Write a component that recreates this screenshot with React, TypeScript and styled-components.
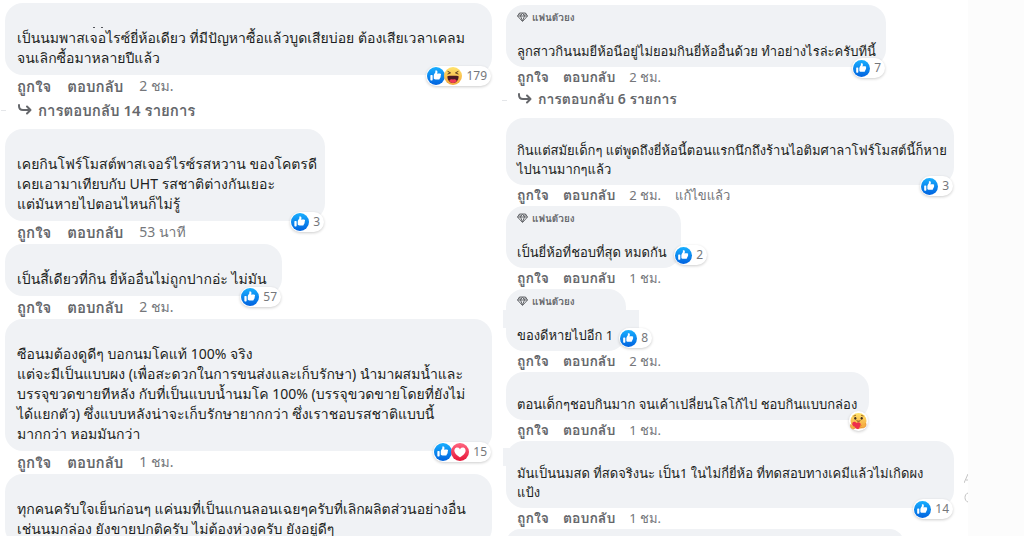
import React from "react";
import styled, { createGlobalStyle, css } from "styled-components";

const GlobalStyle = createGlobalStyle`
  * { box-sizing: border-box; }
  body {
    margin: 0;
    background: #fff;
    overflow: hidden;
    font-family: "Noto Sans", "Loma", "Noto Sans Thai", "Open Sans", sans-serif;
    color: #1c1e21;
  }
`;

type Density = "regular" | "compact";

const Page = styled.main`
  display: grid;
  grid-template-columns: 501fr 467fr 56fr;
  height: 100vh;
  overflow: hidden;
`;

const Thread = styled.section<{ $density: Density }>`
  min-width: 0;
  ${({ $density }) =>
    $density === "regular"
      ? css`
          --text: 14px;
          --line: 20px;
          --top: 25px;
          --bottom: 7px;
          --row: 23px;
          --replies: 31px;
          --gap: 16px;
          --action: 15px;
          --meta: 14px;
          --inset: 12px;
          --icon: 18px;
          padding: 3px 9px 0 5px;
        `
      : css`
          --text: 13px;
          --line: 19px;
          --top: 23px;
          --bottom: 6px;
          --row: 21px;
          --replies: 30px;
          --gap: 14px;
          --action: 14px;
          --meta: 13px;
          --inset: 11px;
          --icon: 17px;
          padding: 5px 14px 0 5px;
        `}
`;

const Comment = styled.article`
  display: flex;
  flex-direction: column;
  align-items: flex-start;
`;

const Bubble = styled.div<{ $width: string }>`
  position: relative;
  width: ${({ $width }) => $width};
  max-width: 100%;
  padding: 0 var(--inset) var(--bottom);
  border-radius: 18px;
  background: #f0f2f5;
`;

const Smudge = styled.span<{ $width: string; $top: string }>`
  position: absolute;
  left: -3px;
  top: ${({ $top }) => $top};
  width: ${({ $width }) => $width};
  height: 18px;
  background: #f0f2f5;
`;

const Specks = styled.span`
  position: absolute;
  left: 88px;
  top: 24px;
  width: 10px;
  height: 1px;
  border: solid #55585c;
  border-width: 0 2px;
`;

const Spacer = styled.div`
  height: var(--top);
`;

const FanBadge = styled.div`
  display: flex;
  align-items: center;
  gap: 4px;
  height: 37px;
  padding-bottom: 13px;
  font-size: 10px;
  font-weight: 600;
  color: #65676b;
`;

const Message = styled.p`
  position: relative;
  margin: 0;
  font-size: var(--text);
  line-height: var(--line);
  white-space: nowrap;
`;

const Line = styled.span`
  display: block;
`;

const Actions = styled.div`
  display: flex;
  align-items: center;
  gap: var(--gap);
  height: var(--row);
  padding: 0 var(--inset) 2px;
  font-size: var(--meta);
  line-height: 18px;
  color: #75777b;
  white-space: nowrap;
`;

const TextButton = styled.button`
  padding: 0;
  border: 0;
  background: none;
  font: inherit;
  font-size: var(--action);
  font-weight: 600;
  color: #65676b;
  cursor: pointer;
`;

const Replies = styled.div`
  position: relative;
  display: flex;
  align-items: center;
  height: var(--replies);
  padding: 0 var(--inset) 8px;
  line-height: 18px;
  white-space: nowrap;

  &::before {
    content: "";
    position: absolute;
    left: -4px;
    top: 12px;
    width: 5px;
    height: 1px;
    background: #e4e6e9;
  }

  ${TextButton} {
    display: flex;
    align-items: center;
    gap: 6px;
  }
`;

const Pill = styled.div<{ $outside?: boolean; $bare?: boolean }>`
  position: absolute;
  right: ${({ $outside }) => ($outside ? "-26px" : "1px")};
  bottom: ${({ $outside }) => ($outside ? "3px" : "-11px")};
  display: flex;
  align-items: center;
  height: 20px;
  padding: 1px ${({ $bare }) => ($bare ? "1px" : "4px")} 1px 1px;
  border-radius: 10px;
  background: #fff;
  box-shadow: 0 1px 3px rgba(0, 0, 0, 0.2);
  font-size: 12px;
  line-height: 18px;
  color: #75777b;

  svg {
    width: var(--icon);
    height: var(--icon);
  }

  svg + svg { margin-left: -1px; }
`;

const Count = styled.span`
  margin-left: 4px;
`;

const Gutter = styled.aside`
  position: relative;
  background: #fcfcfc;

  svg {
    position: absolute;
    left: -4px;
    top: 472px;
  }
`;

const LikeIcon = () => (
  <svg viewBox="0 0 16 16" aria-label="ถูกใจ">
    <defs>
      <linearGradient id="like" x1="0" y1="0" x2="0" y2="1">
        <stop offset="0" stopColor="#18AFFF" />
        <stop offset="1" stopColor="#0062DF" />
      </linearGradient>
    </defs>
    <circle cx="8" cy="8" r="8" fill="url(#like)" />
    <path
      fill="#fff"
      d="M12.016 7.338c.176.123.338.245.338.674 0 .43-.229.604-.474.725.1.163.132.36.089.546-.077.344-.392.611-.672.69.121.194.159.385.015.62-.185.295-.346.407-1.058.407H7.5c-.988 0-1.5-.546-1.5-1V7.665c0-1.23 1.467-2.275 1.467-3.13L7.361 3.47c-.005-.065.008-.224.058-.27.08-.079.301-.2.635-.2.218 0 .363.041.534.123.581.277.732.978.732 1.542 0 .271-.414 1.083-.47 1.364 0 0 .867-.192 1.879-.199 1.061-.006 1.749.19 1.749.842 0 .261-.219.523-.316.666zM3.6 7h.8a.6.6 0 0 1 .6.6v3.8a.6.6 0 0 1-.6.6h-.8a.6.6 0 0 1-.6-.6V7.6a.6.6 0 0 1 .6-.6z"
    />
  </svg>
);

const HeartIcon = () => (
  <svg viewBox="0 0 16 16" aria-label="รักเลย">
    <defs>
      <linearGradient id="heart" x1="0" y1="0" x2="0" y2="1">
        <stop offset="0" stopColor="#FF6680" />
        <stop offset="1" stopColor="#E61739" />
      </linearGradient>
    </defs>
    <circle cx="8" cy="8" r="8" fill="url(#heart)" />
    <path
      fill="#fff"
      d="M10.473 4C8.275 4 8 5.824 8 5.824S7.726 4 5.528 4c-2.114 0-2.73 2.222-2.472 3.41C3.736 10.55 8 12.75 8 12.75s4.265-2.2 4.945-5.34c.257-1.188-.36-3.41-2.472-3.41"
    />
  </svg>
);

const HahaIcon = () => (
  <svg viewBox="0 0 16 16" aria-label="ฮ่าๆ">
    <defs>
      <linearGradient id="haha" x1="0" y1="0" x2="0" y2="1">
        <stop offset="0" stopColor="#FFE36B" />
        <stop offset="1" stopColor="#F5A73C" />
      </linearGradient>
    </defs>
    <circle cx="8" cy="8" r="8" fill="url(#haha)" />
    <path d="M3 8.2c0 3.4 2 6 5 6s5-2.600 5-6c-1.500-.5-8.500-.5-10 0z" fill="#4b1a24" />
    <path d="M4.600 12.300C5.500 10.700 6.700 10.500 8 11.200c1.300-.7 2.500-.5 3.400 1.100-.8 1.200-2 1.900-3.400 1.900s-2.600-.7-3.400-1.900z" fill="#f23c57" />
    <path d="M3.500 4l2.300 1.200-2.300 1M12.500 4l-2.300 1.200 2.300 1" fill="none" stroke="#4b2c1c" strokeWidth=".8" strokeLinecap="round" strokeLinejoin="round" />
  </svg>
);

const CareIcon = () => (
  <svg viewBox="0 0 16 16" aria-label="ห่วงใย">
    <defs>
      <linearGradient id="care" x1="0" y1="0" x2="0" y2="1">
        <stop offset="0" stopColor="#FFE36B" />
        <stop offset="1" stopColor="#F3A03A" />
      </linearGradient>
    </defs>
    <circle cx="8" cy="7.500" r="7.500" fill="url(#care)" />
    <path d="M3.600 2.800l1.700-.6M10.700 2.200l1.700.6" stroke="#8a4b18" strokeWidth=".7" strokeLinecap="round" />
    <ellipse cx="5" cy="5" rx="1" ry="1.300" fill="#3b2a22" />
    <ellipse cx="11" cy="5" rx="1" ry="1.300" fill="#3b2a22" />
    <path d="M6.500 7.300c.8.7 2.200.7 3 0" fill="none" stroke="#5b2a12" strokeWidth=".8" strokeLinecap="round" />
    <path d="M7.600 15.300C4.500 14.400 2 12.500 2.100 10.200c.1-2 2.700-2.600 3.900-.7 1.600-1.700 4.300-.7 4.100 1.400-.1 1.800-1.300 3.300-2.500 4.400z" fill="#ee2f4c" />
    <path d="M.8 10.500c-1 1.200-.6 3.300 1 4.200 1.200.6 2.600.3 3-.5.300-.8-.4-1.300-1.400-1.400M14.800 9.500c.9 1.600.1 3.800-1.800 4.400-1.500.5-3.100-.1-3.400-1-.2-.9.600-1.400 1.700-1.200" fill="#f6b045" stroke="#df7f24" strokeWidth=".5" />
  </svg>
);

const GemIcon = () => (
  <svg width="11" height="10" viewBox="0 0 22 20" fill="none" stroke="#65676b" strokeWidth="2" strokeLinejoin="round" aria-hidden="true">
    <path d="M5 2h12l4 6-10 11L1 8z" />
    <path d="M1 8h20M7 8l4 10 4-10M5 2l2 6 4-6 4 6 2-6" />
  </svg>
);

const ReplyArrow = () => (
  <svg width="15" height="14" viewBox="0 0 15 14" fill="none" stroke="#65676b" strokeWidth="2" strokeLinecap="round" strokeLinejoin="round" aria-hidden="true">
    <path d="M2 2v1c0 2.500 1 4 4 4h7M10 3.500L13.500 7 10 10.500" />
  </svg>
);

type Reaction = "like" | "heart" | "haha" | "care";
const icons: Record<Reaction, React.FC> = { like: LikeIcon, heart: HeartIcon, haha: HahaIcon, care: CareIcon };

interface CommentData {
  lines: string[];
  width?: string;
  fan?: boolean;
  time?: string;
  edited?: boolean;
  replies?: number;
  reactions?: Reaction[];
  count?: number;
  outside?: boolean;
  specks?: boolean;
  smudge?: { width: string; top: string };
}

const left: CommentData[] = [
  {
    lines: ["เป็นนมพาสเจอไรซ์ยี่ห้อเดียว ที่มีปัญหาซื้อแล้วบูดเสียบ่อย ต้องเสียเวลาเคลม", "จนเลิกซื้อมาหลายปีแล้ว"],
    time: "2 ชม.", replies: 14, reactions: ["like", "haha"], count: 179, specks: true,
  },
  {
    lines: ["เคยกินโฟร์โมสต์พาสเจอร์ไรซ์รสหวาน ของโคตรดี", "เคยเอามาเทียบกับ UHT รสชาติต่างกันเยอะ", "แต่มันหายไปตอนไหนก็ไม่รู้"],
    width: "320px", time: "53 นาที", reactions: ["like"], count: 3,
  },
  {
    lines: ["เป็นสี้เดียวที่กิน ยี่ห้ออื่นไม่ถูกปากอ่ะ ไม่มัน"],
    width: "277px", time: "2 ชม.", reactions: ["like"], count: 57,
  },
  {
    lines: [
      "ซือนมต้องดูดีๆ บอกนมโคแท้ 100% จริง",
      "แต่จะมีเป็นแบบผง (เพื่อสะดวกในการขนส่งและเก็บรักษา) นำมาผสมน้ำและ",
      "บรรจุขวดขายทีหลัง กับที่เป็นแบบน้ำนมโค 100% (บรรจุขวดขายโดยที่ยังไม่",
      "ได้แยกตัว) ซึ่งแบบหลังน่าจะเก็บรักษายากกว่า ซึ่งเราชอบรสชาติแบบนี้",
      "มากกว่า หอมมันกว่า",
    ],
    time: "1 ชม.", reactions: ["like", "heart"], count: 15,
  },
  {
    lines: ["ทุกคนครับใจเย็นก่อนๆ แค่นมที่เป็นแกนลอนเฉยๆครับที่เลิกผลิตส่วนอย่างอื่น", "เช่นนมกล่อง ยังขายปกติครับ ไม่ต้องห่วงครับ ยังอยู่ดีๆ"],
  },
];

const right: CommentData[] = [
  {
    lines: ["ลูกสาวกินนมยีห้อนีอยู่ไม่ยอมกินยี่ห้ออื่นด้วย ทำอย่างไรล่ะครับทีนี้"],
    width: "380px", fan: true, time: "2 ชม.", replies: 6, reactions: ["like"], count: 7,
  },
  {
    lines: ["กินแต่สมัยเด็กๆ แต่พูดถึงยี่ห้อนี้ตอนแรกนึกถึงร้านไอติมศาลาโฟร์โมสต์นี้ก็หาย", "ไปนานมากๆแล้ว"],
    time: "2 ชม.", edited: true, reactions: ["like"], count: 3,
  },
  {
    lines: ["เป็นยี่ห้อที่ชอบที่สุด หมดกัน"],
    width: "175px", fan: true, time: "1 ชม.", reactions: ["like"], count: 2, outside: true,
  },
  {
    lines: ["ของดีหายไปอีก 1"],
    width: "120px", fan: true, time: "2 ชม.", reactions: ["like"], count: 8, outside: true,
    smudge: { width: "136px", top: "21px" },
  },
  {
    lines: ["ตอนเด็กๆชอบกินมาก จนเค้าเปลี่ยนโลโก้ไป ชอบกินแบบกล่อง"],
    width: "363px", time: "1 ชม.", reactions: ["care"],
  },
  {
    lines: ["มันเป็นนมสด ที่สดจริงนะ เป็น1 ในไม่กี่ยี่ห้อ ที่ทดสอบทางเคมีแล้วไม่เกิดผง", "แป้ง"],
    time: "1 ชม.", reactions: ["like"], count: 14, smudge: { width: "20px", top: "7px" },
  },
  { lines: [""], width: "398px" },
];

const CommentItem = ({ data }: { data: CommentData }) => (
  <Comment>
    <Bubble $width={data.width ?? "100%"}>
      {data.smudge && <Smudge $width={data.smudge.width} $top={data.smudge.top} />}
      {data.specks && <Specks />}
      {data.fan ? (
        <FanBadge>
          <GemIcon />
          แฟนตัวยง
        </FanBadge>
      ) : (
        <Spacer />
      )}
      <Message>
        {data.lines.map((line) => (
          <Line key={line}>{line}</Line>
        ))}
      </Message>
      {data.reactions && (
        <Pill $outside={data.outside} $bare={data.count === undefined}>
          {data.reactions.map((name) => {
            const Icon = icons[name];
            return <Icon key={name} />;
          })}
          {data.count !== undefined && <Count>{data.count}</Count>}
        </Pill>
      )}
    </Bubble>
    {data.time && (
      <Actions>
        <TextButton type="button">ถูกใจ</TextButton>
        <TextButton type="button">ตอบกลับ</TextButton>
        <span>{data.time}</span>
        {data.edited && <span>แก้ไขแล้ว</span>}
      </Actions>
    )}
    {data.replies && (
      <Replies>
        <TextButton type="button">
          <ReplyArrow />
          การตอบกลับ {data.replies} รายการ
        </TextButton>
      </Replies>
    )}
  </Comment>
);

export default function App() {
  return (
    <>
      <GlobalStyle />
      <Page>
        <Thread $density="regular">
          {left.map((c) => <CommentItem key={c.lines[0]} data={c} />)}
        </Thread>
        <Thread $density="compact">
          {right.map((c) => <CommentItem key={c.lines[0]} data={c} />)}
        </Thread>
        <Gutter>
          <svg width="4" height="32" fill="none" stroke="#c4c4c4" aria-hidden="true">
            <path d="M0 11L4 2M2 8h2M4 21c-4 1-4 8 0 9" />
          </svg>
        </Gutter>
      </Page>
    </>
  );
}
